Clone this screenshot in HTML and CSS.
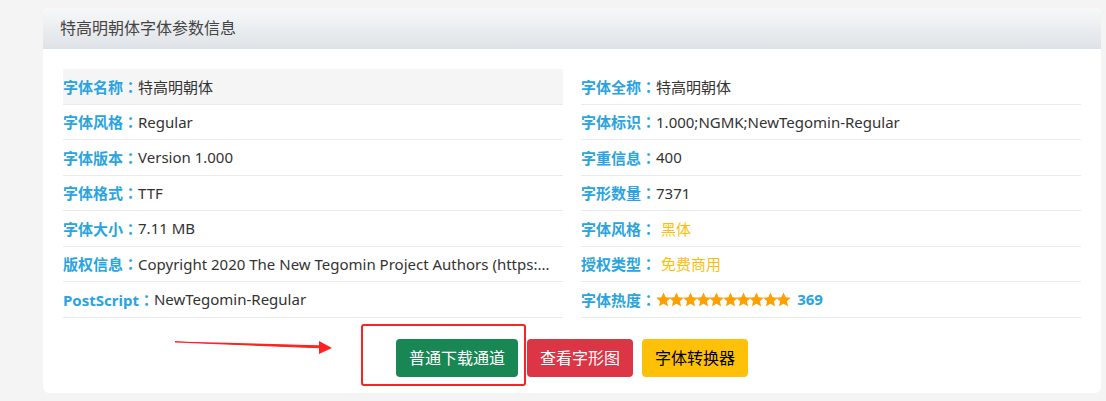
FILE: index.html
```html
<!DOCTYPE html>
<html lang="zh-CN">
<head>
    <meta charset="UTF-8">
    <meta name="viewport" content="width=device-width, initial-scale=1.0">
    <title>特高明朝体字体参数信息</title>
    <link rel="stylesheet" href="styles.css">
</head>
<body>
    <svg width="0" height="0" class="defs">
        <defs>
            <symbol id="star" viewBox="0 0 24 24">
                <path d="M12 0.8l3.4 7.6 8.2.8-6.2 5.5 1.9 8.1L12 18.6l-7.3 4.2 1.9-8.1L.4 9.2l8.2-.8z"/>
            </symbol>
        </defs>
    </svg>

    <div class="panel">
        <div class="panel-heading">特高明朝体字体参数信息</div>
        <div class="panel-body">
            <div class="info-grid">
                <ul class="info-list">
                    <li class="row-hover"><span class="label">字体名称<span class="colon">：</span></span>特高明朝体</li>
                    <li><span class="label">字体风格<span class="colon">：</span></span>Regular</li>
                    <li><span class="label">字体版本<span class="colon">：</span></span>Version 1.000</li>
                    <li><span class="label">字体格式<span class="colon">：</span></span>TTF</li>
                    <li><span class="label">字体大小<span class="colon">：</span></span>7.11 MB</li>
                    <li><span class="label">版权信息<span class="colon">：</span></span>Copyright 2020 The New Tegomin Project Authors (https:...</li>
                    <li><span class="label">PostScript<span class="colon">：</span></span>NewTegomin-Regular</li>
                </ul>
                <ul class="info-list">
                    <li><span class="label">字体全称<span class="colon">：</span></span>特高明朝体</li>
                    <li><span class="label">字体标识<span class="colon">：</span></span>1.000;NGMK;NewTegomin-Regular</li>
                    <li><span class="label">字重信息<span class="colon">：</span></span>400</li>
                    <li><span class="label">字形数量<span class="colon">：</span></span>7371</li>
                    <li><span class="label">字体风格<span class="colon">：</span></span><span class="tag">黑体</span></li>
                    <li><span class="label">授权类型<span class="colon">：</span></span><span class="tag">免费商用</span></li>
                    <li>
                        <span class="label">字体热度<span class="colon">：</span></span>
                        <span class="stars">
                            <svg><use href="#star"/></svg><svg><use href="#star"/></svg><svg><use href="#star"/></svg><svg><use href="#star"/></svg><svg><use href="#star"/></svg><svg><use href="#star"/></svg><svg><use href="#star"/></svg><svg><use href="#star"/></svg><svg><use href="#star"/></svg><svg><use href="#star"/></svg>
                        </span>
                        <span class="hot">369</span>
                    </li>
                </ul>
            </div>

            <div class="actions">
                <a class="btn btn-green" href="#">普通下载通道</a>
                <a class="btn btn-red" href="#">查看字形图</a>
                <a class="btn btn-yellow" href="#">字体转换器</a>
            </div>
        </div>
    </div>

    <!-- 标注：箭头和红框 -->
    <svg class="mark-arrow" width="170" height="20" viewBox="0 0 170 20">
        <path d="M0 3 L150 9 L150 7 Z" fill="#f22" stroke="#f22" stroke-width="1.2"/>
        <path d="M144 2 L157 9 L144 15 Z" fill="#f22"/>
    </svg>
    <div class="mark-box"></div>
</body>
</html>
```

FILE: styles.css
```css
* {
    margin: 0;
    padding: 0;
    box-sizing: border-box;
}

body {
    font-family: "Noto Sans", "Noto Sans CJK SC", sans-serif;
    background-color: #f4f4f4;
    padding: 8px 5px 0 43px;
    font-size: 15px;
    color: #333;
}

.defs {
    position: absolute;
}

.panel {
    width: 1058px;
    background-color: #fff;
    border-radius: 6px;
    overflow: hidden;
}

.panel-heading {
    height: 41px;
    padding-left: 17px;
    line-height: 40px;
    font-size: 16px;
    color: #444;
    background: linear-gradient(#f7f8f9, #dfe3e7);
    border-bottom: 1px solid #d9e3ec;
}

.panel-body {
    padding: 20px 20px 16px;
}

.info-grid {
    display: grid;
    grid-template-columns: 500px 500px;
    column-gap: 18px;
}

.info-list {
    list-style: none;
}

.info-list li {
    display: flex;
    align-items: center;
    height: 35.5px;
    border-bottom: 1px solid #ebebeb;
    white-space: nowrap;
    overflow: hidden;
}

.info-list li.row-hover {
    background-color: #f5f5f5;
}

.label {
    color: #2aa4df;
    font-weight: bold;
}

/* 全角冒号居中显示，不用简中的靠左字形 */
.colon {
    font-family: "Noto Sans CJK JP", sans-serif;
    font-feature-settings: "locl" 0;
    font-weight: bold;
}

.tag {
    color: #fbbf0a;
    margin-left: 5px;
}

.stars {
    display: flex;
    color: #ff9f00;
}

.stars svg {
    width: 15px;
    height: 15px;
    margin-right: -1.7px;
    fill: currentColor;
}

.hot {
    color: #2aa4df;
    font-weight: bold;
    margin-left: 8px;
}

.actions {
    display: flex;
    justify-content: center;
    gap: 9px;
    margin-top: 21px;
}

.btn {
    display: inline-block;
    height: 38px;
    line-height: 38px;
    padding: 0 13px;
    font-size: 16px;
    border-radius: 4px;
    text-decoration: none;
    color: #fff;
}

.btn-green {
    background-color: #198754;
}

.btn-red {
    background-color: #dc3545;
}

.btn-yellow {
    background-color: #ffc107;
    color: #000;
}

.mark-arrow {
    position: absolute;
    left: 175px;
    top: 339px;
}

.mark-box {
    position: absolute;
    left: 361px;
    top: 324px;
    width: 165px;
    height: 62px;
    border: 2px solid #f22;
    border-radius: 3px;
}
```
